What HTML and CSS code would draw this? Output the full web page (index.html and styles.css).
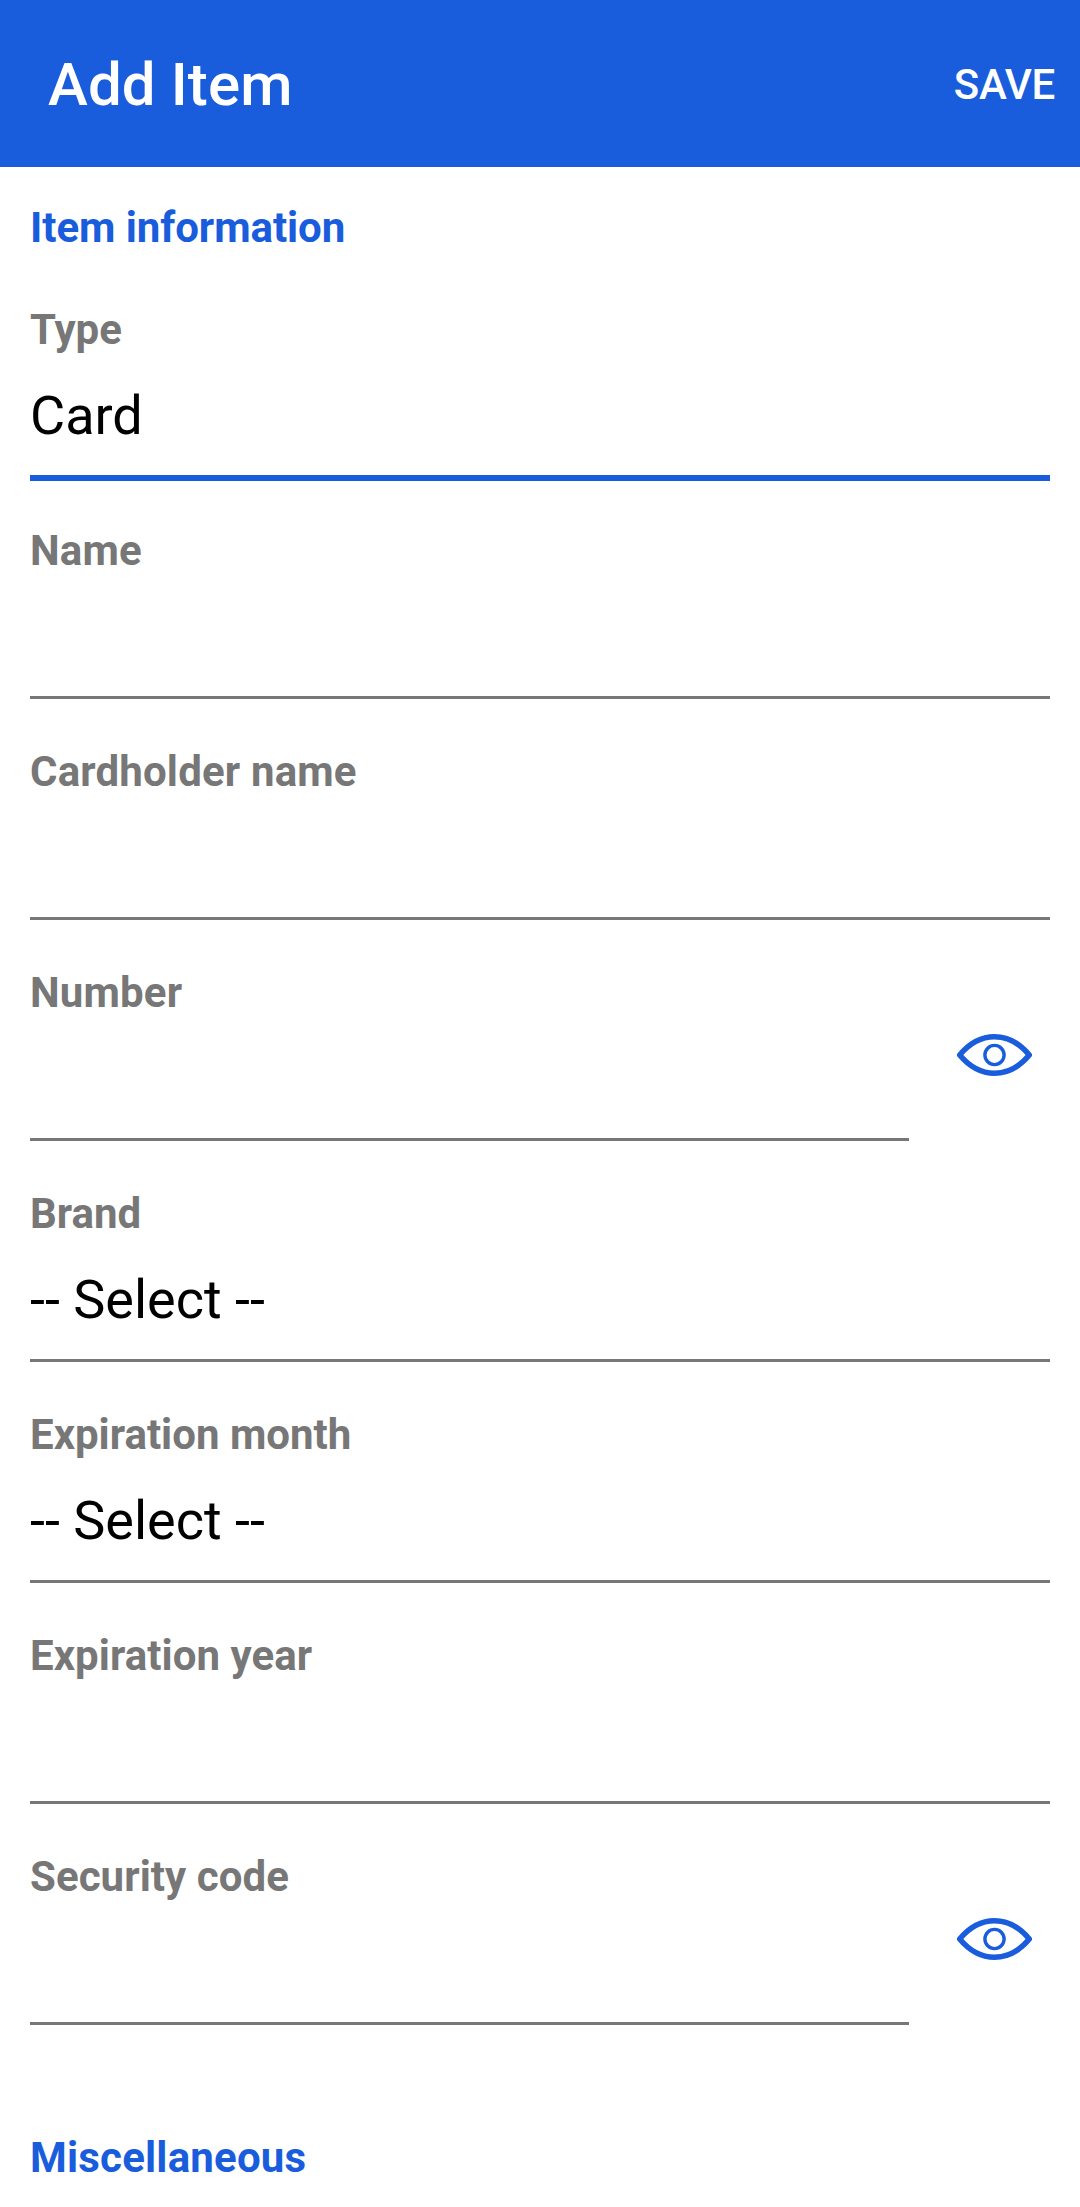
FILE: index.html
```html
<!DOCTYPE html>
<html lang="en">
<head>
<meta charset="utf-8">
<title>Add Item</title>
<link rel="stylesheet" href="styles.css">
</head>
<body>
<header class="toolbar">
  <h1 class="title">Add Item</h1>
  <span class="save">SAVE</span>
</header>
<main class="form">
  <h2 class="section info">Item information</h2>
  <div class="field focused"><div class="label">Type</div><div class="value">Card</div></div>
  <div class="field"><div class="label wide">Name</div></div>
  <div class="field"><div class="label wide">Cardholder name</div></div>
  <div class="row">
    <div class="field"><div class="label wide">Number</div></div>
    <svg class="eye" viewBox="0 0 76 44"><path d="M3.700 22C24-2.300 53-2.300 73.300 22C53 46.300 24 46.300 3.700 22Z" fill="none" stroke="currentColor" stroke-width="5.500" stroke-linejoin="round"/><circle cx="38.500" cy="22" r="9.600" fill="none" stroke="currentColor" stroke-width="3.400"/></svg>
  </div>
  <div class="field"><div class="label">Brand</div><div class="value">-- Select --</div></div>
  <div class="field"><div class="label">Expiration month</div><div class="value">-- Select --</div></div>
  <div class="field"><div class="label year">Expiration year</div></div>
  <div class="row">
    <div class="field"><div class="label year">Security code</div></div>
    <svg class="eye" viewBox="0 0 76 44"><path d="M3.700 22C24-2.300 53-2.300 73.300 22C53 46.300 24 46.300 3.700 22Z" fill="none" stroke="currentColor" stroke-width="5.500" stroke-linejoin="round"/><circle cx="38.500" cy="22" r="9.600" fill="none" stroke="currentColor" stroke-width="3.400"/></svg>
  </div>
  <h2 class="section misc">Miscellaneous</h2>
</main>
</body>
</html>
```
FILE: styles.css
```css
* { box-sizing: border-box; }
body {
  margin: 0;
  background: #fff;
  color: #000;
  font-family: Roboto, sans-serif;
}
h1, h2 { margin: 0; }
.toolbar {
  display: flex;
  justify-content: space-between;
  height: 167px;
  padding: 0 25px 0 48px;
  background: #195ddc;
  color: #fff;
  font-weight: 500;
}
.title {
  padding-top: 50px;
  font-size: 60px;
  font-weight: 500;
  line-height: 70px;
  letter-spacing: 0.1px;
}
.save {
  padding-top: 60px;
  font-size: 42px;
  line-height: 49px;
  letter-spacing: -0.3px;
}
.form { padding: 0 30px; }
.section {
  height: 90px;
  padding-top: 36px;
  color: #195ddc;
  font-size: 42px;
  font-weight: 700;
  line-height: 49px;
}
.info { letter-spacing: -0.06px; }
.field {
  height: 221px;
  padding-top: 48px;
  border-bottom: 3px solid #777;
}
.focused {
  height: 224px;
  border-bottom: 6px solid #195ddc;
}
.focused + .field {
  height: 218px;
  padding-top: 45px;
}
.label {
  color: #777;
  font-size: 42px;
  font-weight: 700;
  line-height: 49px;
}
.wide { letter-spacing: 0.17px; }
.year { letter-spacing: 0.06px; }
.value {
  margin-top: 30px;
  font-size: 54px;
  line-height: 63px;
}
.row {
  display: flex;
  align-items: flex-start;
}
.row .field { width: 879px; }
.eye {
  width: 76px;
  height: 44px;
  margin: 113px 0 0 47px;
  color: #195ddc;
}
.misc {
  height: 182px;
  padding-top: 108px;
  letter-spacing: 0.2px;
}
```
